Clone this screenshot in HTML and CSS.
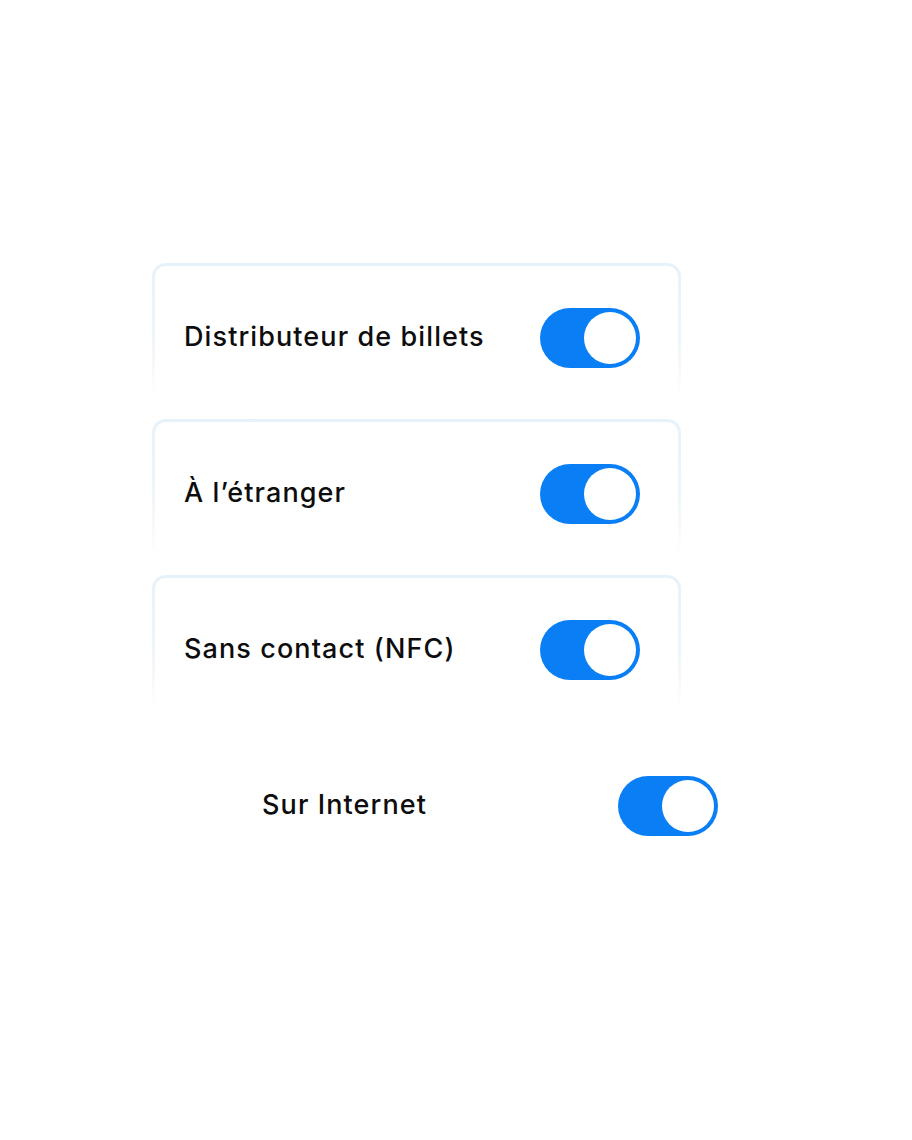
FILE: index.html
```html
<!DOCTYPE html>
<html lang="fr">
<head>
<meta charset="utf-8">
<link rel="stylesheet" href="styles.css">
</head>
<body>
<div class="list">
  <div class="card">
    <span class="label">Distributeur de billets</span>
    <span class="toggle"><span class="knob"></span></span>
  </div>
  <div class="card">
    <span class="label">À l’étranger</span>
    <span class="toggle"><span class="knob"></span></span>
  </div>
  <div class="card">
    <span class="label">Sans contact (NFC)</span>
    <span class="toggle"><span class="knob"></span></span>
  </div>
  <div class="card card-ghost">
    <span class="label">Sur Internet</span>
    <span class="toggle"><span class="knob"></span></span>
  </div>
</div>
</body>
</html>
```
FILE: styles.css
```css
html, body {
  margin: 0;
  padding: 0;
  background: #ffffff;
}
body {
  font-family: "Inter", "Liberation Sans", sans-serif;
  width: 912px;
  height: 1140px;
  overflow: hidden;
}
.list {
  display: flex;
  flex-direction: column;
  align-items: flex-start;
  gap: 18px;
  padding-top: 263px;
  padding-left: 152px;
}
.card {
  box-sizing: border-box;
  width: 529px;
  height: 138px;
  border: 3px solid transparent;
  border-radius: 14px;
  background:
    linear-gradient(#ffffff, #ffffff) padding-box,
    linear-gradient(180deg, #e6f2fa 0%, #f0f6fa 60%, rgba(245,248,250,0) 100%) border-box;
  display: flex;
  align-items: center;
  justify-content: space-between;
  padding: 12px 38px 0 29px;
}
.card-ghost {
  margin-left: 78px;
  background: transparent;
}
.label {
  font-size: 27px;
  font-weight: 550;
  color: #0d0d0d;
  letter-spacing: 1.1px;
  line-height: 1;
  margin-top: -3px;
}
.toggle {
  position: relative;
  display: block;
  width: 100px;
  height: 60px;
  border-radius: 30px;
  background: #0a7ff5;
  flex: none;
}
.knob {
  position: absolute;
  top: 4px;
  right: 4px;
  width: 52px;
  height: 52px;
  border-radius: 50%;
  background: #ffffff;
}
```
